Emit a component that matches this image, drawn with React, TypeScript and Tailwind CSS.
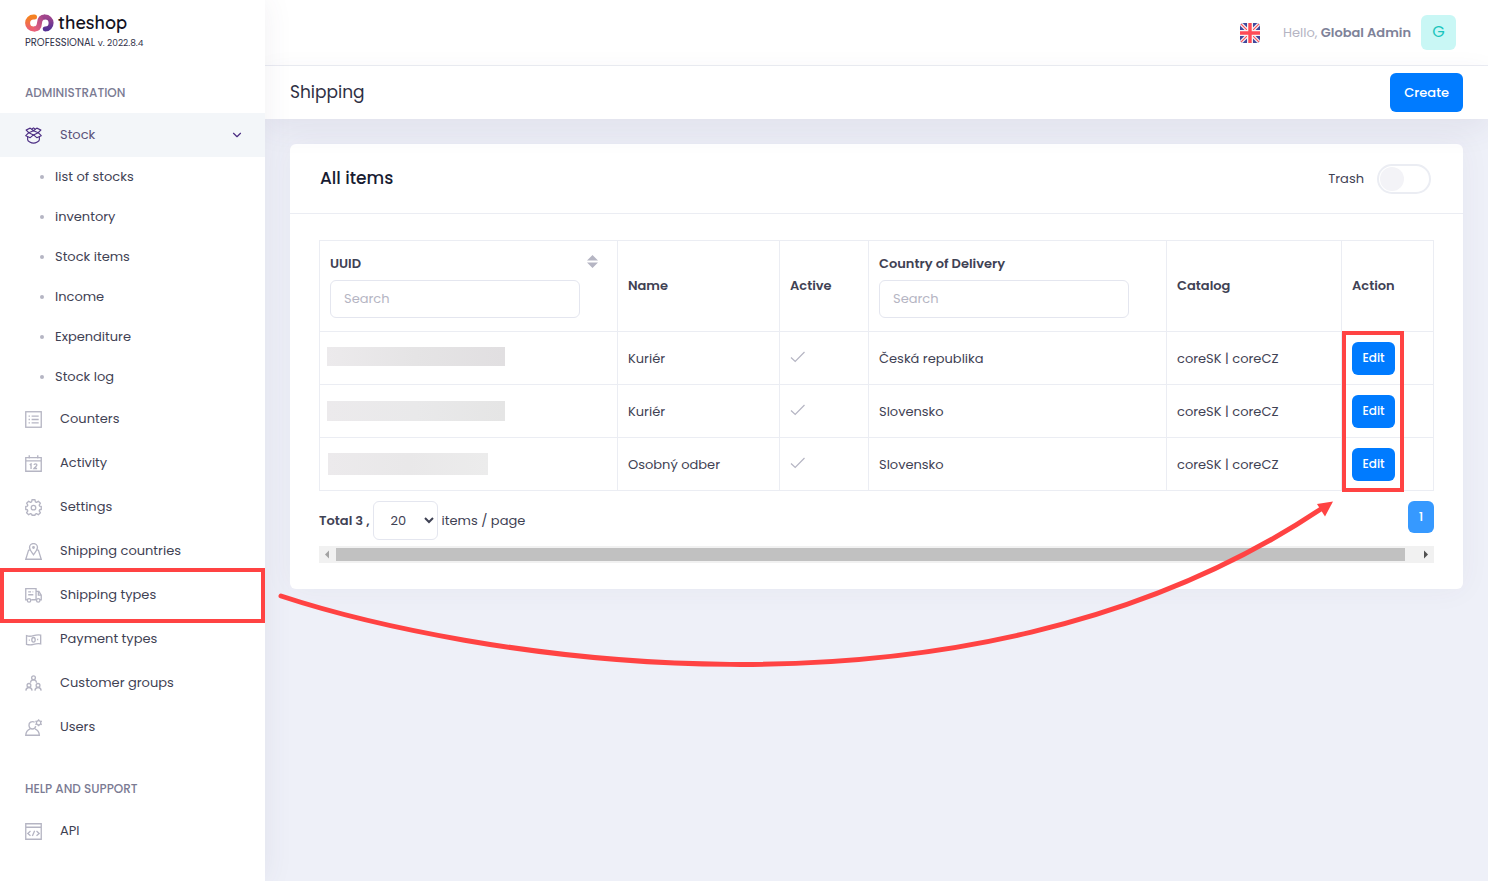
import React from 'react'
import { ChevronDown } from 'lucide-react'

type IconName =
  | 'box'
  | 'list'
  | 'calendar'
  | 'gear'
  | 'map'
  | 'truck'
  | 'cash'
  | 'groups'
  | 'user'
  | 'code'

const icons: Record<IconName, React.ReactNode> = {
  box: (
    <g strokeWidth="1.2" strokeLinejoin="round">
      <path d="M9 4 5.500 1.200 1.200 3.200 4 6 .8 9.200 5.500 11.300 9 8.400l3.500 2.900 4.700-2.100L14 6l2.800-2.800-4.300-2L9 4Z" />
      <path d="M4 6l5 2.400L14 6 9 4 4 6ZM7 2.400 9 .9l2 1.500M2.800 10.300v3.200c0 1.600 3.800 3.600 6.200 3.600s6.200-2 6.200-3.600v-3.200" />
    </g>
  ),
  list: (
    <>
      <rect x=".8" y=".8" width="16.400" height="16.400" />
      <path d="M7 5.500h7.500M7 9h7.500M7 12.500h7.500M3.800 5.500h1.400M3.800 9h1.400M3.800 12.500h1.400" />
    </>
  ),
  calendar: (
    <>
      <path d="M.8 2.800h16.400v14.400H.8zM.8 6.300h16.400M4.500.2v3.400M13.500.2v3.400" />
      <path d="m5 10.400 1.400-.9v5.200M9.600 10.600c.2-1.600 3-1.500 3 .1 0 1.200-1.700 2-3 3.600h3.200" />
    </>
  ),
  gear: (
    <>
      <path
        d="M7.400.8h3.200l.4 2.300 1.200.5 1.900-1.300 2.200 2.200-1.300 1.900.5 1.200 1.700.3v3.200l-1.700.3-.5 1.200 1.300 1.900-2.200 2.200-1.900-1.300-1.200.5-.4 1.300H7.400L7 15.900l-1.200-.5-1.900 1.300-2.200-2.200L3 12.600l-.5-1.200-1.700-.3V7.900l1.700-.3L3 6.400 1.700 4.500l2.200-2.200 1.900 1.300L7 3.100 7.400.8Z"
        strokeLinejoin="round"
      />
      <circle cx="9" cy="9.200" r="2.400" />
    </>
  ),
  map: (
    <>
      <path d="M9 12.400C7.400 10 4.800 7.200 4.800 4.800a4.200 4.200 0 0 1 8.400 0C13.200 7.200 10.600 10 9 12.400Z" />
      <circle cx="9" cy="4.800" r=".8" />
      <path d="M5.200 7.200 3.800 7.600.8 17.200h16.400l-3-9.600-1.400-.4" />
    </>
  ),
  truck: (
    <>
      <path d="M2 13.500H.8V1.800h10.900v11.700H6.600M11.700 4.600h3l2.500 4v4.900h-1.400M12.400 13.500h-.8M14.200 5v3.600h3M3.400 5.200h3M3.400 8.200h5.400M8 5.200h.8" />
      <circle cx="4.300" cy="14.200" r="1.800" />
      <circle cx="14" cy="14.200" r="1.800" />
    </>
  ),
  cash: (
    <>
      <path d="M1.600 5c3 1 5.400.6 7.400 0s4.600-1.200 7.600-.6v9.200c-3-.6-5.600 0-7.600.6s-4.400.8-7.400 0V5Z" />
      <ellipse cx="9" cy="9.300" rx="1.800" ry="2.400" />
      <path d="M4 9.600h1.200M12.800 9H14" />
    </>
  ),
  groups: (
    <>
      <circle cx="9" cy="3" r="2" />
      <path d="M5.800 8.200C6 6 7.200 5.200 9 5.200s3 .8 3.200 3" />
      <circle cx="4.200" cy="11" r="2" />
      <path d="M.9 16.500c.2-2.300 1.500-3.300 3.300-3.300s3.100 1 3.300 3.300" />
      <circle cx="13.800" cy="11" r="2" />
      <path d="M10.500 16.500c.2-2.300 1.500-3.300 3.300-3.300s3.100 1 3.300 3.300" />
    </>
  ),
  user: (
    <>
      <path d="M10.200 3.200C7 1.800 4 3.800 4.200 6.800c.2 2.200 1.600 3.800 3.600 3.800 1.800 0 3.200-1.200 3.500-3" />
      <path d="M5.400 10.400C2.600 11.600.9 14 .8 17.200h14.400c-.1-3.200-1.800-5.600-4.600-6.800" />
      <circle cx="14.400" cy="4" r="2.300" />
      <path d="M14.400.2v1.500M14.400 6.300v1.500M11 2.100l1.300.7M16.500 5.200l1.300.7M11 5.900l1.300-.7M16.500 2.800l1.300-.7" />
    </>
  ),
  code: (
    <>
      <path d="M.8.8h16.400v16.400H.8zM.8 4.500h16.400" />
      <path d="M5.800 8.500 3 11l2.800 2.500M12.200 8.500 15 11l-2.800 2.500M10.200 8.200l-2.400 5.600" />
    </>
  ),
}

const NavIcon: React.FC<{ name: IconName }> = ({ name }) => (
  <svg viewBox="0 0 18 18" className="size-[17px] shrink-0" fill="none" stroke="currentColor" strokeWidth="1.4" aria-hidden="true">
    {icons[name]}
  </svg>
)

const stockLinks = ['list of stocks', 'inventory', 'Stock items', 'Income', 'Expenditure', 'Stock log']

const navLinks: { label: string; icon: IconName; marked?: boolean }[] = [
  { label: 'Counters', icon: 'list' },
  { label: 'Activity', icon: 'calendar' },
  { label: 'Settings', icon: 'gear' },
  { label: 'Shipping countries', icon: 'map' },
  { label: 'Shipping types', icon: 'truck', marked: true },
  { label: 'Payment types', icon: 'cash' },
  { label: 'Customer groups', icon: 'groups' },
  { label: 'Users', icon: 'user' },
]

const rows = [
  {
    name: 'Kuriér',
    country: 'Česká republika',
    mask: 'w-[178px] h-[19px] mb-1 -ml-[3px] bg-linear-to-r from-[#eceaec] via-[#e5e4e5] to-[#e1dfe1]',
  },
  {
    name: 'Kuriér',
    country: 'Slovensko',
    mask: 'w-[178px] h-5 -ml-[3px] bg-linear-to-r from-[#eceaec] via-[#e9e9ea] to-[#e5e5e5]',
  },
  {
    name: 'Osobný odber',
    country: 'Slovensko',
    mask: 'w-40 h-[22px] -ml-0.5 bg-linear-to-r from-[#eceaec] via-[#e9e8e9] to-[#ececec]',
  },
]

const Logo = () => (
  <svg viewBox="0 0 29 18" className="h-[18px] w-[29px]" fill="none" strokeWidth="5" aria-hidden="true">
    <defs>
      <linearGradient id="logoWarm" x1="0" y1="0" x2="0" y2="1">
        <stop offset="0" stopColor="#f58220" />
        <stop offset="1" stopColor="#ec5f72" />
      </linearGradient>
      <linearGradient id="logoPink" x1="0" y1="1" x2="1" y2="0">
        <stop offset="0" stopColor="#e8607c" />
        <stop offset="1" stopColor="#a0458c" />
      </linearGradient>
      <linearGradient id="logoCool" x1="0" y1="0" x2="0" y2="1">
        <stop offset="0" stopColor="#a0458c" />
        <stop offset="1" stopColor="#553195" />
      </linearGradient>
    </defs>
    <path d="M9.5 3H8.600a6 6 0 0 0 0 12H9.500" stroke="url(#logoWarm)" strokeLinecap="round" />
    <path d="M9 15c3.800 0 5.300-2.500 5.500-6S16.500 3 20 3.010" stroke="url(#logoPink)" />
    <path d="M20 3a6 6 0 0 1 .2 12.010" stroke="url(#logoCool)" strokeLinecap="round" />
  </svg>
)

const Sidebar = () => (
  <aside className="relative z-20 w-[265px] shrink-0 bg-white shadow-[0_0_28px_rgba(82,63,105,0.08)]">
    <div className="h-20 px-[25px] pt-[13px]">
      <a href="#home" className="flex h-5 items-center gap-1 text-[#14141f]">
        <Logo />
        <span className="font-['Quicksand','Lato',sans-serif] text-lg leading-5 font-semibold">theshop</span>
      </a>
      <p className="pt-0.5 text-[10px] leading-4 text-[#33334a]">
        PROFESSIONAL <span className="text-[9px]">v. 2022.8.4</span>
      </p>
    </div>

    <nav aria-label="Main">
      <h2 className="h-[33px] px-[25px] pt-1 text-xs leading-[18px] font-medium text-[#7b7b93]">ADMINISTRATION</h2>
      <button type="button" aria-expanded="true" className="flex h-11 w-full items-center bg-[#f3f6f9] pr-[21px] pl-[25px] text-[#4b2d83]">
        <NavIcon name="box" />
        <span className="flex-1 pl-[18px] text-left text-[#5a5278]">Stock</span>
        <ChevronDown size={14} strokeWidth={2} />
      </button>
      <ul>
        {stockLinks.map((label) => (
          <li key={label}>
            <a href="#stock" className="flex h-10 items-center gap-[11px] pl-10">
              <span className="size-1 rounded-full bg-[#b5b5c3]" />
              {label}
            </a>
          </li>
        ))}
      </ul>
      <ul>
        {navLinks.map(({ label, icon, marked }) => (
          <li key={label} className="relative">
            <a href="#section" className="flex h-11 items-center gap-[18px] px-[25px]">
              <span className="text-[#b5b5c3]"><NavIcon name={icon} /></span>
              {label}
            </a>
            {marked && <div className="pointer-events-none absolute inset-x-0 -top-[5px] -bottom-1.5 border-4 border-[#ff4343]" />}
          </li>
        ))}
      </ul>
      <h2 className="h-[60px] px-[25px] pt-[31px] text-xs leading-[18px] font-medium text-[#7b7b93]">HELP AND SUPPORT</h2>
      <a href="#api" className="flex h-11 items-center gap-[18px] px-[25px]">
        <span className="text-[#b5b5c3]"><NavIcon name="code" /></span>
        API
      </a>
    </nav>
  </aside>
)

const Flag = () => (
  <svg viewBox="0 0 20 20" className="size-5 rounded" role="img" aria-label="English">
    <path fill="#41479b" d="M0 0h20v20H0z" />
    <path stroke="#f5f5f5" strokeWidth="3.6" d="m0 0 20 20M20 0 0 20" />
    <path stroke="#ff4b55" strokeWidth="1.1" d="m0 0 20 20M20 0 0 20" />
    <path stroke="#f5f5f5" strokeWidth="6" d="M10 0v20M0 10h20" />
    <path stroke="#ff4b55" strokeWidth="3.4" d="M10 0v20M0 10h20" />
  </svg>
)

const Header = () => (
  <>
    <header className="flex h-[66px] items-center justify-end border-b border-[#ebedf3] bg-white pr-8">
      <button type="button" className="mr-[23px]"><Flag /></button>
      <span className="pr-2.5 text-[#b5b5c3]">
        Hello, <b className="font-semibold text-[#7e8299]">Global Admin</b>
      </span>
      <button type="button" className="size-[35px] rounded-md bg-[#c9f7f5] pb-0.5 text-base text-[#1bc5bd]">G</button>
    </header>
    <div className="relative z-10 flex h-[53px] items-center justify-between bg-white px-[25px] shadow-[0_10px_30px_rgba(82,63,105,0.08)]">
      <h1 className="text-[17px] text-[#2f3044]">Shipping</h1>
      <button type="button" className="h-[39px] rounded-md bg-[#007bff] px-3.5 font-medium text-white">Create</button>
    </div>
  </>
)

const Check = () => (
  <svg viewBox="0 0 16 12" className="h-3 w-4" fill="none" stroke="#b5b5c3" strokeWidth="1.2" role="img" aria-label="Yes">
    <path d="m1 6.500 4.200 4L14.500 1" />
  </svg>
)

const SearchField: React.FC<{ label: string }> = ({ label }) => (
  <input
    type="text"
    aria-label={label}
    placeholder="Search"
    className="mt-1.5 block h-[38px] w-[250px] rounded-md border border-[#e4e6ef] px-[13px] font-normal placeholder:text-[#b5b5c3]"
  />
)

const headCell = 'border border-[#ebedf3] px-2.5 text-left font-semibold'
const cell = 'border border-[#ebedf3] px-2.5 text-left'

const ItemsTable = () => (
  <table className="w-full table-fixed border-collapse">
    <colgroup>
      <col />
      <col className="w-[162px]" />
      <col className="w-[89px]" />
      <col className="w-[298px]" />
      <col className="w-[175px]" />
      <col className="w-[92px]" />
    </colgroup>
    <thead>
      <tr className="h-[91px]">
        <th className={headCell}>
          <div className="flex items-start justify-between pr-[9px] leading-5">
            UUID
            <svg viewBox="0 0 11 13" className="mt-px h-[13px] w-[11px]" fill="#b5b5c3" aria-hidden="true">
              <path d="M5.500 0 11 5.500H0zM5.500 13 0 7.500h11z" />
            </svg>
          </div>
          <SearchField label="UUID" />
        </th>
        <th className={headCell}>Name</th>
        <th className={headCell}>Active</th>
        <th className={headCell}>
          <div className="leading-5">Country of Delivery</div>
          <SearchField label="Country of Delivery" />
        </th>
        <th className={headCell}>Catalog</th>
        <th className={headCell}>Action</th>
      </tr>
    </thead>
    <tbody>
      {rows.map((row, i) => (
        <tr key={i} className="h-[53px]">
          <td className={cell}><div className={row.mask} /></td>
          <td className={`${cell} pt-0.5`}>{row.name}</td>
          <td className={`${cell} pb-0.5`}><Check /></td>
          <td className={`${cell} pt-0.5`}>{row.country}</td>
          <td className={`${cell} pt-0.5`}>coreSK | coreCZ</td>
          <td className={`${cell} relative`}>
            <button type="button" className="block h-[33px] w-[43px] rounded-md bg-[#007bff] text-xs font-medium text-white">Edit</button>
            {/* frame spans all three edit buttons */}
            {i === 0 && <div className="pointer-events-none absolute -top-px left-0 z-10 h-[161px] w-[62px] border-4 border-[#ff4343]" />}
          </td>
        </tr>
      ))}
    </tbody>
  </table>
)

const ScrollBar = () => (
  <div className="mt-1.5 flex h-[17px] items-center bg-[#f1f1f1]">
    <svg viewBox="0 0 17 17" className="size-[17px]" fill="#a3a3a3" aria-hidden="true"><path d="M10 4.500v8L6 8.500z" /></svg>
    <div className="mr-3 h-[13px] flex-1 bg-[#c1c1c1]" />
    <svg viewBox="0 0 17 17" className="size-[17px]" fill="#505050" aria-hidden="true"><path d="M7 4.500v8l4-4z" /></svg>
  </div>
)

const ItemsCard = () => (
  <section className="rounded-md bg-white shadow-[0_0_30px_rgba(82,63,105,0.05)]">
    <div className="flex h-[70px] items-center justify-between border-b border-[#ebedf3] pr-8 pl-[30px]">
      <h2 className="text-[17px] font-medium text-[#181c32]">All items</h2>
      <label className="flex items-center gap-[13px]">
        Trash
        <input
          type="checkbox"
          role="switch"
          className="h-[30px] w-[54px] appearance-none rounded-full border-2 border-[#ebedf3] before:mt-px before:ml-px before:block before:size-6 before:rounded-full before:bg-[#f3f3f7] checked:before:ml-[25px]"
        />
      </label>
    </div>
    <div className="px-[29px] pt-[26px] pb-[26px]">
      <ItemsTable />
      <div className="flex items-start justify-between pt-2.5">
        <div className="flex items-center">
          <b className="font-semibold">Total 3 ,</b>
          <select aria-label="Items per page" defaultValue="20" className="mr-1 ml-[3px] h-[39px] w-[65px] rounded-md border border-[#e4e6ef] bg-white pl-[13px]">
            <option>20</option>
            <option>50</option>
            <option>100</option>
          </select>
          <span>items / page</span>
        </div>
        <button type="button" aria-current="page" className="h-8 w-[26px] rounded-md bg-[#3699ff] font-medium text-white">1</button>
      </div>
      <ScrollBar />
    </div>
  </section>
)

const Arrow = () => (
  <svg viewBox="0 0 1068 180" className="pointer-events-none absolute top-[495px] left-[270px] z-30 h-[180px] w-[1068px]" fill="none" aria-hidden="true">
    <path d="M11 101C181 157 690 257 1054 12" stroke="#ff4343" strokeWidth="5" strokeLinecap="round" />
    <path d="M1063 6.500 1047 9l8 12.500z" fill="#ff4343" />
  </svg>
)

export default function App() {
  return (
    <div className="relative flex min-h-screen bg-[#eef0f8] font-['Poppins','Inter',sans-serif] text-[13px] text-[#3f4254]">
      <Sidebar />
      <div className="min-w-0 flex-1">
        <Header />
        <main className="p-[25px]">
          <ItemsCard />
        </main>
      </div>
      <Arrow />
    </div>
  )
}
